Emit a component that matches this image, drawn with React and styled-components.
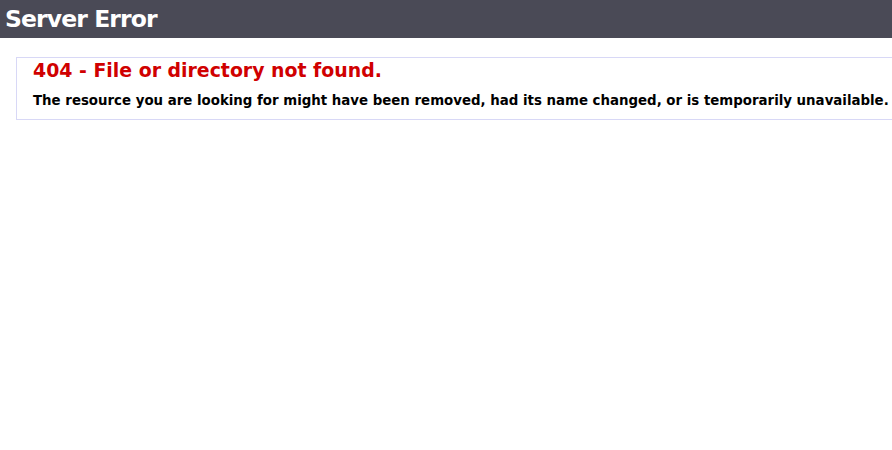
import React from "react";
import styled, { createGlobalStyle } from "styled-components";

const Global = createGlobalStyle`
  html, body { margin: 0; padding: 0; background: #fff; overflow: hidden; }
  body { font-size: 11.2px; font-family: "DejaVu Sans", Verdana, sans-serif; }
`;

const Header = styled.div`
  background: #4a4a56;
  height: 38px;
  padding: 0 5px;
  display: flex;
  align-items: center;
`;

const Title = styled.h1`
  margin: 0;
  color: #fff;
  font-size: 23.5px;
  font-weight: bold;
  font-family: "DejaVu Sans", Verdana, sans-serif;
  letter-spacing: -0.9px;
`;

const Content = styled.div`
  margin: 19px -20px 0 16px;
`;

const Box = styled.fieldset`
  margin: 0;
  border: 1px solid #d8d8f6;
  padding: 0 15px 10px 16px;
  min-width: 0;
`;

const Heading = styled.h2`
  margin: 0;
  padding-top: 0;
  color: #d00000;
  font-size: 18.9px;
  font-weight: bold;
  line-height: 24px;
`;

const Message = styled.h3`
  margin: 11px 0 0 0;
  color: #000;
  font-size: 13.35px;
  font-weight: bold;
  line-height: 16px;
`;

export default function App() {
  return (
    <>
      <Global />
      <Header>
        <Title>Server Error</Title>
      </Header>
      <Content>
        <Box>
          <Heading>404 - File or directory not found.</Heading>
          <Message>
            The resource you are looking for might have been removed, had its name changed, or is temporarily unavailable.
          </Message>
        </Box>
      </Content>
    </>
  );
}
